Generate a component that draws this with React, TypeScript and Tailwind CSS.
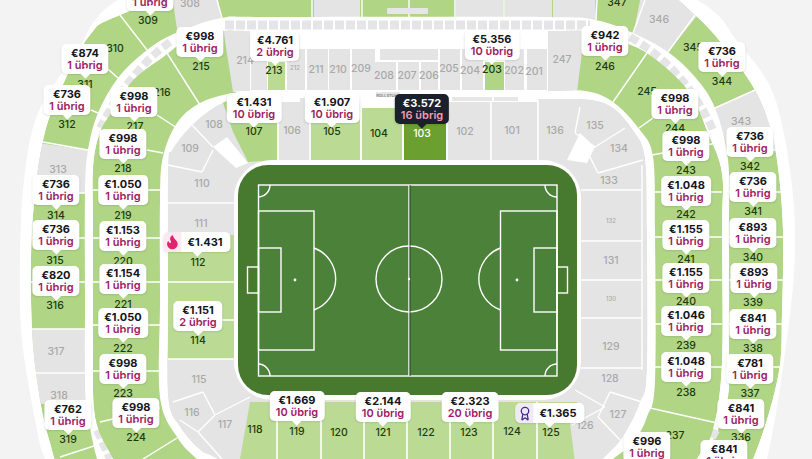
import { Award, Flame } from 'lucide-react';

type Pt = [number, number];
type Pin = { x: number; y: number; price: string; left?: string; kind?: 'dark' | 'hot' | 'best' };

const GREY = '#e4e4e4';
const GREEN = '#b0d585';
const PALE = '#bbdb94';

// closed smooth path through points (catmull-rom)
function smooth(pts: Pt[]) {
  const n = pts.length;
  let d = `M${pts[0][0]},${pts[0][1]}`;
  for (let i = 0; i < n; i++) {
    const p0 = pts[(i - 1 + n) % n];
    const p1 = pts[i];
    const p2 = pts[(i + 1) % n];
    const p3 = pts[(i + 2) % n];
    const c1 = [p1[0] + (p2[0] - p0[0]) / 6, p1[1] + (p2[1] - p0[1]) / 6];
    const c2 = [p2[0] - (p3[0] - p1[0]) / 6, p2[1] - (p3[1] - p1[1]) / 6];
    d += `C${c1[0]},${c1[1]} ${c2[0]},${c2[1]} ${p2[0]},${p2[1]}`;
  }
  return d + 'Z';
}

const outer = smooth([[407, -70], [250, -50], [118, 0], [75, 55], [38, 113], [24, 180], [20, 260], [22, 340], [37, 430], [45, 459], [70, 520], [407, 560], [740, 520], [767, 459], [788, 330], [795, 247], [790, 170], [773, 93], [740, 45], [697, 0], [570, -50]]);
const upper = smooth([[407, -50], [250, -30], [120, 15], [90, 35], [65, 80], [43, 140], [32, 230], [32, 330], [40, 400], [50, 443], [60, 470], [90, 510], [407, 540], [720, 510], [753, 459], [778, 377], [782, 313], [783, 230], [778, 167], [770, 127], [755, 90], [727, 50], [695, 15], [645, -20], [540, -40]]);
const ring = smooth([[270, 17], [222, 18], [178, 32], [147, 50], [118, 78], [98, 113], [88, 150], [85, 195], [85, 300], [85, 375], [87, 410], [97, 459], [110, 490], [407, 520], [690, 490], [703, 459], [718, 430], [728, 397], [729, 363], [729, 230], [728, 160], [715, 108], [695, 77], [668, 52], [633, 33], [595, 20], [540, 17]]);
const second = smooth([[270, 31], [223, 31], [190, 38], [163, 57], [133, 80], [113, 110], [100, 132], [93, 167], [93, 230], [93, 340], [95, 417], [113, 459], [130, 490], [407, 510], [680, 490], [697, 459], [713, 430], [722, 363], [722, 230], [722, 173], [708, 133], [688, 90], [647, 53], [610, 38], [583, 31], [540, 31]]);
const ring2 = smooth([[270, 91], [233, 93], [200, 103], [177, 123], [163, 157], [160, 200], [160, 300], [160, 397], [177, 437], [197, 459], [225, 480], [407, 490], [590, 480], [613, 459], [633, 443], [647, 417], [655, 380], [655, 230], [653, 157], [640, 130], [613, 102], [585, 91], [540, 91]]);
const lower = smooth([[270, 99], [233, 100], [213, 108], [190, 127], [172, 150], [168, 167], [168, 300], [168, 397], [180, 427], [200, 450], [217, 459], [240, 480], [407, 490], [580, 480], [603, 459], [623, 437], [640, 403], [647, 370], [647, 230], [645, 157], [633, 130], [612, 107], [585, 99], [540, 99]]);

const upperGrey = [
  '172,-5 217,-5 222,22 178,36',
  '38,143 88,150 90,193 30,193',
  '28,329 90,329 90,410 36,403',
  '645,-25 700,12 668,52 633,36',
  '715,108 755,90 790,150 728,150',
  '314,-5 360,-5 360,18 314,18',
  '456,-5 503,-5 503,18 456,18',
  '505,-5 552,-5 552,18 505,18',
  '553,-5 595,-5 596,22 553,18',
];

const upperLines = [
  '120,15 147,50', '92,55 118,78', '91,110 98,113', '43,142 88,150', '30,193 86,193', '30,238 86,238', '30,282 86,282',
  '30,329 86,329', '30,373 86,373', '645,0 633,33', '597,0 596,20', '217,0 222,18', '312,0 312,17', '362,0 362,17', '409,0 409,17', '455,0 455,17', '504,0 504,17', '695,15 668,52',
  '755,90 715,108', '728,150 785,150', '729,192 785,192', '729,237 785,237', '729,280 785,280', '729,324 785,324', '729,367 785,367', '60,457 97,445',
];

const secondLines = [
  '167,53 200,105', '157,115 177,128', '147,150 163,153', '93,190 160,190', '93,238 160,238', '93,282 160,282', '93,325 160,325', '93,371 160,371',
  '160,408 100,422', '177,438 143,459', '647,53 613,102', '653,118 639,128', '717,143 652,155', '655,192 722,192', '655,237 722,237', '655,280 722,280',
  '655,324 722,324', '655,367 722,367', '650,408 717,423',
];

const lowerLines = [
  '168,203 234,203', '168,282 234,282', '198,320 234,320', '168,359 234,359', '173,402 203,392', '203,392 215,415', '215,415 250,397', '215,415 198,432', '180,420 198,432', '198,432 222,459',
  '581,190 642,190', '581,241 642,241', '581,280 642,280', '581,318 642,318', '581,368 642,368', '575,390 605,407', '610,392 642,402', '610,392 598,417', '598,417 620,440',
  '642,165 642,370', '192,125 213,147', '168,165 202,172', '202,172 213,150', '580,107 575,133', '575,133 595,147', '595,147 625,128', '590,157 598,173', '598,173 643,160',
  '605,407 572,425',
];

const topRow: [number, number, number, number, string?][] = [
  [251, 49, 16, 41], [268, 62, 17, 28, PALE], [287, 49, 18, 41], [307, 49, 21, 41], [329, 49, 21, 41], [352, 49, 23, 41],
  [375, 62, 21, 28], [398, 62, 21, 28], [421, 62, 17, 28], [440, 49, 20, 41], [462, 49, 21, 41], [485, 62, 19, 28, GREEN], [505, 49, 19, 41], [527, 49, 20, 41],
];

const labelGrey = new Set(['308', '313', '317', '318', '346', '343', '214', '247', '212', '211', '210', '209', '208', '207', '206', '205', '204', '202', '201', '101', '102', '106', '108', '109', '110', '111', '115', '116', '117', '126', '127', '128', '129', '130', '131', '132', '133', '134', '135', '136']);

const numbers: [string, number, number][] = [
  ['309', 148, 20], ['308', 190, 3], ['310', 115, 48], ['311', 85, 84], ['312', 67, 124], ['313', 58, 169], ['314', 56, 215], ['315', 55, 260], ['316', 55, 305], ['317', 56, 351], ['318', 59, 395], ['319', 68, 439],
  ['214', 245, 60], ['215', 201, 66], ['216', 162, 92], ['217', 135, 126], ['218', 123, 168], ['219', 123, 215], ['220', 123, 261], ['221', 123, 304], ['222', 123, 348], ['223', 123, 393], ['224', 136, 437],
  ['108', 214, 124], ['109', 190, 148], ['110', 202, 183], ['111', 201, 223], ['112', 198, 262], ['114', 198, 340], ['115', 199, 379], ['116', 192, 412], ['117', 225, 424], ['118', 255, 429],
  ['119', 297, 431], ['120', 339, 432], ['121', 383, 432], ['122', 426, 432], ['123', 469, 432], ['124', 512, 431], ['125', 551, 432], ['126', 585, 425], ['127', 618, 414], ['128', 610, 378], ['129', 611, 346], ['131', 611, 260], ['133', 609, 180], ['134', 619, 148], ['135', 595, 125], ['136', 555, 130],
  ['101', 512, 130], ['102', 465, 131], ['104', 379, 133], ['105', 332, 131], ['106', 292, 130], ['107', 254, 131],
  ['201', 534, 71], ['202', 514, 70], ['203', 492, 69], ['204', 470, 70], ['205', 449, 68], ['206', 429, 75], ['207', 407, 75], ['208', 384, 75], ['209', 361, 68], ['210', 338, 69], ['211', 316, 69], ['213', 274, 70],
  ['247', 562, 59], ['246', 605, 66], ['245', 647, 91], ['244', 675, 128], ['243', 686, 170], ['242', 686, 214], ['241', 686, 259], ['240', 686, 301], ['239', 686, 345], ['238', 686, 392], ['237', 675, 435],
  ['347', 617, 2], ['346', 659, 19], ['345', 693, 47], ['344', 722, 81], ['343', 741, 121], ['342', 750, 166], ['341', 753, 211], ['340', 753, 257], ['339', 753, 302], ['338', 753, 348], ['337', 750, 393], ['336', 741, 437],
];

const pins: Pin[] = [
  { x: 150, y: -19, price: '€998', left: '1 übrig' },
  { x: 85, y: 44, price: '€874', left: '1 übrig' },
  { x: 67, y: 85, price: '€736', left: '1 übrig' },
  { x: 134, y: 87, price: '€998', left: '1 übrig' },
  { x: 200, y: 27, price: '€998', left: '1 übrig' },
  { x: 123, y: 129, price: '€998', left: '1 übrig' },
  { x: 56, y: 175, price: '€736', left: '1 übrig' },
  { x: 123, y: 175, price: '€1.050', left: '1 übrig' },
  { x: 56, y: 220, price: '€736', left: '1 übrig' },
  { x: 123, y: 221, price: '€1.153', left: '1 übrig' },
  { x: 56, y: 266, price: '€820', left: '1 übrig' },
  { x: 123, y: 264, price: '€1.154', left: '1 übrig' },
  { x: 123, y: 308, price: '€1.050', left: '1 übrig' },
  { x: 123, y: 354, price: '€998', left: '1 übrig' },
  { x: 68, y: 400, price: '€762', left: '1 übrig' },
  { x: 136, y: 398, price: '€998', left: '1 übrig' },
  { x: 197, y: 232, price: '€1.431', kind: 'hot' },
  { x: 198, y: 301, price: '€1.151', left: '2 übrig' },
  { x: 254, y: 93, price: '€1.431', left: '10 übrig' },
  { x: 275, y: 31, price: '€4.761', left: '2 übrig' },
  { x: 332, y: 93, price: '€1.907', left: '10 übrig' },
  { x: 422, y: 94, price: '€3.572', left: '16 übrig', kind: 'dark' },
  { x: 492, y: 30, price: '€5.356', left: '10 übrig' },
  { x: 605, y: 26, price: '€942', left: '1 übrig' },
  { x: 722, y: 42, price: '€736', left: '1 übrig' },
  { x: 675, y: 89, price: '€998', left: '1 übrig' },
  { x: 686, y: 131, price: '€998', left: '1 übrig' },
  { x: 750, y: 127, price: '€736', left: '1 übrig' },
  { x: 686, y: 176, price: '€1.048', left: '1 übrig' },
  { x: 753, y: 172, price: '€736', left: '1 übrig' },
  { x: 686, y: 220, price: '€1.155', left: '1 übrig' },
  { x: 753, y: 218, price: '€893', left: '1 übrig' },
  { x: 686, y: 263, price: '€1.155', left: '1 übrig' },
  { x: 754, y: 263, price: '€893', left: '1 übrig' },
  { x: 686, y: 306, price: '€1.046', left: '1 übrig' },
  { x: 753, y: 309, price: '€841', left: '1 übrig' },
  { x: 686, y: 352, price: '€1.048', left: '1 übrig' },
  { x: 750, y: 354, price: '€781', left: '1 übrig' },
  { x: 741, y: 399, price: '€841', left: '1 übrig' },
  { x: 647, y: 432, price: '€996', left: '1 übrig' },
  { x: 724, y: 440, price: '€841', left: '1 übrig' },
  { x: 297, y: 391, price: '€1.669', left: '10 übrig' },
  { x: 383, y: 392, price: '€2.144', left: '10 übrig' },
  { x: 470, y: 392, price: '€2.323', left: '20 übrig' },
  { x: 550, y: 403, price: '€1.365', kind: 'best' },
];

function Lines({ items, width = 1.4 }: { items: string[]; width?: number }) {
  return (
    <>
      {items.map((p) => (
        <polyline key={p} points={p} fill="none" stroke="#fff" strokeWidth={width} />
      ))}
    </>
  );
}

function Pitch() {
  const line = { fill: 'none', stroke: '#fff', strokeWidth: 1.4 };
  return (
    <g>
      <rect x="234" y="160" width="347" height="240" rx="38" fill="#fff" />
      <rect x="238" y="165" width="339" height="230" rx="30" fill="#47792f" />
      <rect x="258" y="185" width="299" height="191" fill="#4b8139" />
      <g {...line}>
        <rect x="258.5" y="185" width="298.5" height="191" />
        <line x1="409" y1="185" x2="409" y2="376" />
        <circle cx="409" cy="279" r="33" />
        <rect x="258.5" y="211" width="55.5" height="139" />
        <rect x="500.5" y="211" width="56.5" height="139" />
        <rect x="258.5" y="248" width="22.5" height="64" />
        <rect x="534" y="248" width="23" height="64" />
        <rect x="247.5" y="267" width="11" height="26" />
        <rect x="557" y="267" width="10.5" height="26" />
        <path d="M314,248 A33,33 0 0 1 314,310" />
        <path d="M500.5,248 A33,33 0 0 0 500.5,310" />
        <path d="M270,185 A12,12 0 0 1 258.5,197" />
        <path d="M545,185 A12,12 0 0 0 557,197" />
        <path d="M258.5,364 A12,12 0 0 1 270,376" />
        <path d="M557,364 A12,12 0 0 0 545,376" />
      </g>
      <line x1="410" y1="185" x2="410" y2="376" stroke="#16300d" strokeWidth="0.8" />
      <circle cx="295" cy="280" r="1.4" fill="#fff" />
      <circle cx="517" cy="280" r="1.4" fill="#fff" />
      <circle cx="409" cy="279" r="1.2" fill="#fff" />
    </g>
  );
}

function StadiumMap() {
  return (
    <svg viewBox="0 0 812 459" className="absolute left-0 top-0 h-[459px] w-[812px]">
      <defs>
        <clipPath id="upper-tier"><path d={upper} /></clipPath>
        <clipPath id="second-tier"><path d={second} /></clipPath>
        <clipPath id="lower-tier"><path d={lower} /></clipPath>
      </defs>
      <path d={outer} fill="#fff" />

      <g clipPath="url(#upper-tier)">
        <path d={upper} fill={GREEN} />
        {upperGrey.map((p) => (
          <polygon key={p} points={p} fill={GREY} />
        ))}
        <Lines items={upperLines} />
      </g>
      <path d={ring} fill="#fff" />
      <g fill="none" stroke="#e5e5e8" strokeWidth="8">
        <path d="M225,25 H590" strokeWidth="9" strokeDasharray="9 2" />
        <path d="M170,42 Q130,70 100,128" strokeDasharray="9 4" />
        <path d="M630,37 Q685,68 713,130" strokeDasharray="9 4" />
        <path d="M97,430 L110,459" strokeDasharray="9 4" />
        <path d="M716,430 L708,445" strokeDasharray="9 4" />
      </g>

      <g clipPath="url(#second-tier)">
        <path d={second} fill={GREEN} />
        <polygon points="223,28 250,28 250,92 233,92" fill={GREY} />
        <polygon points="548,28 585,28 577,92 548,92" fill={GREY} />
        <rect x="250" y="30" width="298" height="62" fill="#fff" />
        {topRow.map(([x, y, w, h, c]) => (
          <rect key={x} x={x} y={y} width={w} height={h} fill={c ?? GREY} />
        ))}
        <rect x="380" y="49" width="58" height="11" fill={GREY} />
        <Lines items={secondLines} />
      </g>
      <path d={ring2} fill="#fff" />

      <g clipPath="url(#lower-tier)">
        <path d={lower} fill={GREY} />
        <rect x="168" y="235" width="66" height="124" fill={PALE} />
        <polygon points="222,100 277,100 277,160 248,162 233,132" fill={GREEN} />
        <rect x="311" y="101" width="49" height="59" fill={PALE} />
        <rect x="362" y="108" width="40" height="52" fill={PALE} />
        <rect x="404" y="108" width="42" height="52" fill="#6b9f30" />
        <polygon points="250,402 577,402 577,470 238,470" fill={PALE} />
        {[277, 321, 364, 407, 450, 493, 537].map((x) => (
          <line key={x} x1={x} y1="402" x2={x} y2="470" stroke="#fff" strokeWidth="1.6" />
        ))}
        <polygon points="570,423 577,423 584,470 576,470" fill={GREY} />
        {[278, 310, 361, 403, 447, 491, 538].map((x) => (
          <line key={x} x1={x} y1="100" x2={x} y2="160" stroke="#fff" strokeWidth="1.6" />
        ))}
        <rect x="278" y="99" width="260" height="3" fill="#fff" />
        <rect x="362" y="99" width="84" height="9" fill="#fff" />
        <polygon points="227,137 248,163 236,168 213,147" fill="#fff" />
        <polygon points="580,133 567,160 587,163 595,147" fill="#fff" />
        <Lines items={lowerLines} />
      </g>
      <g fill="#e6e6e6">
        <rect x="300" y="98" width="60" height="5" />
        <rect x="376" y="92" width="24" height="5" />
        <rect x="452" y="97" width="40" height="4" />
        <rect x="494" y="97" width="24" height="4" />
        <rect x="643.5" y="262" width="3" height="45" />
        <rect x="387" y="8" width="41" height="6" rx="1" />
      </g>

      <Pitch />

      <g fontFamily="Inter, sans-serif" fontSize="10.5" fontWeight="500" textAnchor="middle" dominantBaseline="central">
        {numbers.map(([n, x, y]) => (
          <text key={n} x={x} y={y} fill={labelGrey.has(n) ? '#a9a9a9' : '#1c3a0e'}>{n}</text>
        ))}
        <text x="422" y="133" fill="#fff">103</text>
        <text x="611" y="298" fontSize="6" fill="#a9a9a9">130</text>
        <text x="611" y="220" fontSize="6" fill="#a9a9a9">132</text>
        <text x="295" y="67" fontSize="6" fill="#a9a9a9">212</text>
        <text x="388" y="95" fontSize="4" fill="#777">ROLLSTUHL</text>
      </g>
    </svg>
  );
}

function PriceTag({ pin }: { pin: Pin }) {
  const dark = pin.kind === 'dark';
  const single = pin.kind === 'hot' || pin.kind === 'best';
  return (
    <div className="absolute -translate-x-1/2" style={{ left: pin.x, top: pin.y }}>
      <div
        className={`relative flex items-center rounded-[5px] shadow-[0_1px_2px_rgba(0,0,0,0.1)] ${dark ? 'bg-[#1a202c]' : 'bg-white'} ${single ? 'h-5 pr-2' : 'h-[30px] flex-col justify-center px-[6px]'}`}
      >
        {pin.kind === 'hot' && (
          <span className="flex h-5 w-[18px] items-center justify-center rounded-l-[5px] bg-[#fbe9ef]">
            <Flame size={16} className="fill-[#e0246f] text-[#e0246f]" />
          </span>
        )}
        {pin.kind === 'best' && (
          <span className="flex h-5 w-[18px] items-center justify-center rounded-l-[5px] bg-[#efeaf8]">
            <Award size={15} className="text-[#43278f]" />
          </span>
        )}
        <span className={`whitespace-nowrap text-[11px] leading-[12.5px] font-bold ${dark ? 'text-white' : 'text-[#14151a]'} ${single ? 'ml-[6px]' : ''}`}>
          {pin.price}
        </span>
        {pin.left && (
          <span className={`whitespace-nowrap text-[11px] leading-[12.5px] font-semibold ${dark ? 'text-[#f59ab8]' : 'text-[#9c1b62]'}`}>
            {pin.left}
          </span>
        )}
        <span className={`absolute -bottom-[3px] left-1/2 h-2 w-2 -translate-x-1/2 rotate-45 ${dark ? 'bg-[#1a202c]' : 'bg-white'}`} />
      </div>
    </div>
  );
}

export default function App() {
  return (
    <div className="relative h-[459px] w-[812px] overflow-hidden bg-[#f3f3f3] font-['Inter',sans-serif]">
      <StadiumMap />
      {pins.map((pin) => (
        <PriceTag key={`${pin.x}-${pin.y}`} pin={pin} />
      ))}
    </div>
  );
}
